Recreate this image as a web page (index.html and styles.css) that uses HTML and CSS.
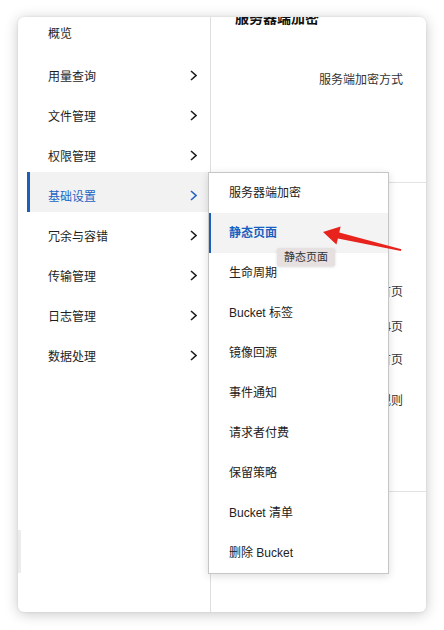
FILE: index.html
```html
<!DOCTYPE html>
<html lang="zh-CN">
<head>
<meta charset="utf-8">
<title>基础设置</title>
<link rel="stylesheet" href="styles.css">
</head>
<body>
<div class="card">
  <nav class="sidebar">
    <div class="nav-item first"><span>概览</span></div>
    <div class="nav-item"><span>用量查询</span><svg class="chev" viewBox="0 0 7 11"><path d="M1 1 L6 5.5 L1 10"/></svg></div>
    <div class="nav-item"><span>文件管理</span><svg class="chev" viewBox="0 0 7 11"><path d="M1 1 L6 5.5 L1 10"/></svg></div>
    <div class="nav-item"><span>权限管理</span><svg class="chev" viewBox="0 0 7 11"><path d="M1 1 L6 5.5 L1 10"/></svg></div>
    <div class="nav-item active"><span>基础设置</span><svg class="chev" viewBox="0 0 7 11"><path d="M1 1 L6 5.5 L1 10"/></svg></div>
    <div class="nav-item"><span>冗余与容错</span><svg class="chev" viewBox="0 0 7 11"><path d="M1 1 L6 5.5 L1 10"/></svg></div>
    <div class="nav-item"><span>传输管理</span><svg class="chev" viewBox="0 0 7 11"><path d="M1 1 L6 5.5 L1 10"/></svg></div>
    <div class="nav-item"><span>日志管理</span><svg class="chev" viewBox="0 0 7 11"><path d="M1 1 L6 5.5 L1 10"/></svg></div>
    <div class="nav-item"><span>数据处理</span><svg class="chev" viewBox="0 0 7 11"><path d="M1 1 L6 5.5 L1 10"/></svg></div>
  </nav>
  <main class="main">
    <section class="sec sec-top">
      <div class="title">服务器端加密</div>
      <div class="row first-row">服务端加密方式</div>
    </section>
    <section class="sec sec-mid">
      <div class="row r1">默认首页</div>
      <div class="row r2">默认404页</div>
      <div class="row r3">子目录首页</div>
      <div class="row r4">重定向规则</div>
    </section>
  </main>
  <div class="scroll-thumb"></div>
  <ul class="dropdown">
    <li class="dd-item">服务器端加密</li>
    <li class="dd-item active">静态页面</li>
    <li class="dd-item">生命周期</li>
    <li class="dd-item">Bucket 标签</li>
    <li class="dd-item">镜像回源</li>
    <li class="dd-item">事件通知</li>
    <li class="dd-item">请求者付费</li>
    <li class="dd-item">保留策略</li>
    <li class="dd-item">Bucket 清单</li>
    <li class="dd-item">删除 Bucket</li>
  </ul>
  <div class="tooltip">静态页面</div>
</div>
<svg class="arrow" width="444" height="630" viewBox="0 0 444 630">
  <polygon points="323,232 340.6,226.4 339.3,232.4 401.4,249.2 400.8,250.9 337.9,238.6 336.4,244.6"/>
</svg>
</body>
</html>
```
FILE: styles.css
```css
* { box-sizing: border-box; }
html, body { margin: 0; padding: 0; background: #fff; }
body {
  font-family: "Liberation Sans", "Noto Sans CJK SC", sans-serif;
  font-size: 12px;
  color: #1e1e1e;
  width: 444px;
  height: 630px;
  position: relative;
  overflow: hidden;
}
.card {
  position: relative;
  margin: 17px 0 0 18px;
  width: 408px;
  height: 595px;
  background: #fff;
  border-radius: 6px;
  box-shadow: 0 2px 14px rgba(0,0,0,0.22), 0 0 3px rgba(0,0,0,0.08);
  display: flex;
  overflow: hidden;
}
.sidebar {
  width: 193px;
  flex: none;
  border-right: 1px solid #dedede;
  padding-left: 9px;
}
.nav-item {
  height: 40px;
  padding: 7px 13px 0 21px;
  display: flex;
  align-items: center;
  justify-content: space-between;
  color: #1e1e1e;
}
.nav-item.first { height: 35px; padding-top: 0; padding-bottom: 5px; }
.nav-item.active {
  background: #f2f2f2;
  box-shadow: inset 3px 0 0 #1b5fb8;
  color: #2264c2;
}
.chev { width: 7px; height: 11px; fill: none; stroke: currentColor; stroke-width: 1.6; }
.main { flex: 1; display: flex; flex-direction: column; }
.sec { padding: 0 23px 0 24px; border-bottom: 1px solid #e2e2e2; }
.sec-top { height: 166px; }
.sec-mid { height: 309px; padding-top: 99px; }
.title { font-size: 14px; font-weight: bold; line-height: 20px; margin-top: -9px; color: #111; }
.row { line-height: 20px; text-align: right; color: #333; }
.first-row { margin-top: 42px; }
.r2 { margin-top: 15px; }
.r3 { margin-top: 13px; }
.r4 { margin-top: 21px; }
.scroll-thumb {
  position: absolute;
  left: 0; top: 513px;
  width: 3px; height: 43px;
  background: #ececec;
}
.dropdown {
  position: absolute;
  left: 190px; top: 155px;
  width: 181px;
  margin: 0; padding: 0;
  list-style: none;
  background: #fff;
  border: 1px solid #c6c6c6;
  box-shadow: 0 2px 8px rgba(0,0,0,0.14);
}
.dd-item {
  height: 40px;
  line-height: 40px;
  padding-left: 20px;
  color: #222;
}
.dd-item.active {
  background: #f3f3f3;
  box-shadow: inset 2px 0 0 #1b5fb8;
  color: #1a5fc0;
  font-weight: bold;
}
.tooltip {
  position: absolute;
  left: 259px; top: 231px;
  height: 18px;
  line-height: 18px;
  padding: 0 7px;
  font-size: 11px;
  color: #333;
  background: #e6e0e0;
  border-radius: 2px;
  box-shadow: 0 1px 3px rgba(0,0,0,0.15);
}
.arrow { position: absolute; left: 0; top: 0; pointer-events: none; }
.arrow polygon { fill: #e8221c; }
```
